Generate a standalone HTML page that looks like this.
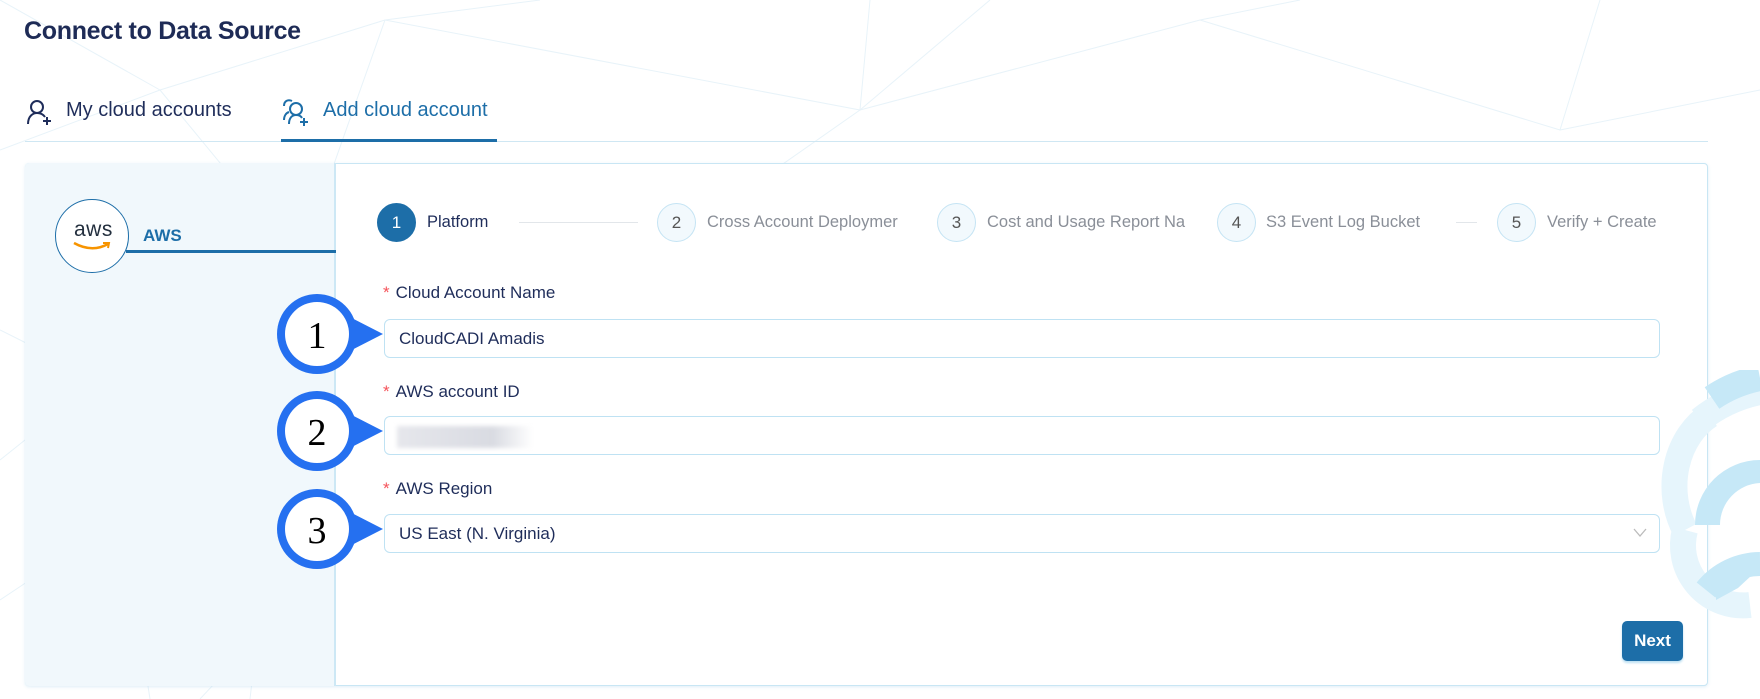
<!DOCTYPE html>
<html><head><meta charset="utf-8"><style>
*{box-sizing:border-box;margin:0;padding:0}
body{width:1760px;height:699px;background:#fff;font-family:"Liberation Sans",sans-serif;position:relative;overflow:hidden;color:#1f2d5a}
.abs{position:absolute}
.title{left:24px;top:17px;font-size:25px;font-weight:bold;color:#1e2b56;letter-spacing:-0.3px}
.tab{top:99px;font-size:20px}
.card{left:25px;top:163px;width:1683px;height:523px;border:1px solid #c8e6f4;border-radius:4px;background:#fff;box-shadow:0 1px 3px rgba(150,200,230,.3)}
.left{left:25px;top:163px;width:311px;height:523px;background:#f1f8fc;border-right:2px solid #cde8f5;border-radius:4px 0 0 4px}
.step{top:203px;width:39px;height:39px;border-radius:50%;border:1px solid #c5e4f4;background:#f2f9fd;color:#555;font-size:17px;text-align:center;line-height:37px}
.stxt{top:213px;font-size:16.5px;color:#8a8f98}
.sline{top:222px;height:1px;background:#e2e6ea}
.lbl{left:383px;font-size:17px;color:#1f2d5a}
.lbl b{color:#f5535a;font-weight:normal;margin-right:6px}
.fld{left:384px;width:1276px;height:39px;border:1px solid #bfe2f3;border-radius:6px;background:#fff;font-size:17px;padding-left:14px;line-height:37px;color:#1f2d5a}
</style></head><body>
<svg class="abs" style="left:0;top:0" width="1760" height="699">
<g stroke="#e8f3f9" stroke-width="1" fill="none">
<path d="M0 150 L160 90 L385 20 L540 0"/><path d="M160 90 L0 0"/><path d="M160 90 L300 260 L100 380 L0 330"/><path d="M385 20 L300 260 L560 320"/><path d="M385 20 L860 110 L870 0"/><path d="M860 110 L1200 20 L1300 0"/><path d="M860 110 L560 320"/><path d="M860 110 L990 0"/><path d="M100 380 L150 699"/><path d="M300 260 L250 699"/><path d="M100 380 L0 460"/><path d="M0 600 L120 520 L330 560"/><path d="M1560 130 L1760 90"/><path d="M1200 20 L1560 130 L1600 0"/><path d="M560 320 L700 170"/><path d="M330 560 L200 699"/>
</g></svg>
<div class="abs title">Connect to Data Source</div>
<svg class="abs" style="left:26px;top:99px" width="28" height="28" fill="none" stroke="#1f2d5a" stroke-width="2"><circle cx="11" cy="8" r="6"/><path d="M2 25 C2 17 7 14 11 14 C14 14 17 15 19 18"/><path d="M21 18 V26 M17 22 H25"/></svg>
<div class="abs tab" style="left:66px">My cloud accounts</div>
<svg class="abs" style="left:281px;top:98px" width="30" height="30" fill="none" stroke="#1d6ea8" stroke-width="2"><circle cx="15" cy="11" r="6"/><path d="M11 3 C7 1 3 3 3 8 M3 22 C3 18 5 15 8 14"/><path d="M8 26 C8 20 11 17 15 17 C18 17 20 18 21 20"/><path d="M23 20 V28 M19 24 H27"/></svg>
<div class="abs tab" style="left:323px;color:#1d6ea8">Add cloud account</div>
<div class="abs" style="left:25px;top:141px;width:1683px;height:1px;background:#cfe7f3"></div>
<div class="abs" style="left:281px;top:139px;width:216px;height:3px;background:#1d6ea8"></div>
<div class="abs card"></div>
<svg class="abs" style="left:1600px;top:370px" width="160" height="260">
<path d="M85 160 A65 80 0 0 1 110 45" stroke="#e6f5fc" stroke-width="26" fill="none"/>
<path d="M85 160 A60 60 0 0 0 150 235" stroke="#e6f5fc" stroke-width="26" fill="none"/>
<path d="M100 50 A140 140 0 0 1 160 22" stroke="#e6f5fc" stroke-width="26" fill="none"/>
<path d="M112 28 A130 130 0 0 1 160 8" stroke="#c6e8f7" stroke-width="26" fill="none"/>
<path d="M160 194 A70 70 0 0 0 106 220" stroke="#c6e8f7" stroke-width="24" fill="none"/>
<path d="M160 90 A65 65 0 0 0 95 155 L120 155 A42 42 0 0 1 160 113Z" fill="#c6e8f7"/>
<path d="M116 196 L152 205 L138 218 L116 230Z" fill="#c6e8f7"/>
</svg>
<div class="abs left"></div>
<div class="abs" style="left:126px;top:250px;width:210px;height:3px;background:#1d6ea8"></div>
<div class="abs" style="left:55px;top:199px;width:74px;height:74px;border-radius:50%;border:1.5px solid #1d6ea8;background:#fff"></div>
<div class="abs" style="left:74px;top:218px;font-size:21px;color:#232f3e;letter-spacing:0.5px">aws</div>
<svg class="abs" style="left:72px;top:241px" width="40" height="12"><path d="M2 2 Q20 12 36 3" stroke="#f79400" stroke-width="2.5" fill="none"/><path d="M31 2 L37 2 L36 7" stroke="#f79400" stroke-width="2" fill="none"/></svg>
<div class="abs" style="left:143px;top:226px;font-size:17px;color:#1d6ea8;font-weight:bold">AWS</div>
<div class="abs step" style="left:377px;background:#1d6ea8;border-color:#1d6ea8;color:#fff">1</div>
<div class="abs stxt" style="left:427px;color:#1f2d5a">Platform</div>
<div class="abs sline" style="left:519px;width:119px"></div>
<div class="abs step" style="left:657px">2</div>
<div class="abs stxt" style="left:707px;width:212px;overflow:hidden;white-space:nowrap">Cross Account Deploymer</div>
<div class="abs step" style="left:937px">3</div>
<div class="abs stxt" style="left:987px;width:212px;overflow:hidden;white-space:nowrap">Cost and Usage Report Na</div>
<div class="abs step" style="left:1217px">4</div>
<div class="abs stxt" style="left:1266px">S3 Event Log Bucket</div>
<div class="abs sline" style="left:1456px;width:21px"></div>
<div class="abs step" style="left:1497px">5</div>
<div class="abs stxt" style="left:1547px">Verify + Create</div>
<div class="abs lbl" style="top:283px"><b>*</b>Cloud Account Name</div>
<div class="abs fld" style="top:319px">CloudCADI Amadis</div>
<div class="abs lbl" style="top:382px"><b>*</b>AWS account ID</div>
<div class="abs fld" style="top:416px"><div style="position:absolute;left:12px;top:9px;width:136px;height:22px;background:linear-gradient(90deg,#e6e7ec,#d9dbe2 70%,#fff);filter:blur(2px)"></div></div>
<div class="abs lbl" style="top:479px"><b>*</b>AWS Region</div>
<div class="abs fld" style="top:514px">US East (N. Virginia)<svg style="position:absolute;right:12px;top:13px" width="14" height="10"><path d="M1 1 L7 8 L13 1" stroke="#bbb" stroke-width="1.3" fill="none"/></svg></div>
<svg class="abs" style="left:270px;top:290px" width="120" height="290">
<g fill="#2570f0"><circle cx="47" cy="44" r="40"/><path d="M70 22 L113 44 L70 66Z"/><circle cx="47" cy="141" r="40"/><path d="M70 119 L113 141 L70 163Z"/><circle cx="47" cy="239" r="40"/><path d="M70 217 L113 239 L70 261Z"/></g>
<g fill="#fff"><circle cx="47" cy="44" r="32"/><circle cx="47" cy="141" r="32"/><circle cx="47" cy="239" r="32"/></g>
<g font-family="Liberation Serif,serif" font-size="38" text-anchor="middle" fill="#000"><text x="47" y="58">1</text><text x="47" y="155">2</text><text x="47" y="253">3</text></g>
</svg>
<div class="abs" style="left:1622px;top:621px;width:61px;height:40px;border-radius:5px;background:#1d6ea8;color:#fff;font-size:17px;font-weight:bold;text-align:center;line-height:40px;box-shadow:0 2px 2px #bde0f2">Next</div>
</body></html>
